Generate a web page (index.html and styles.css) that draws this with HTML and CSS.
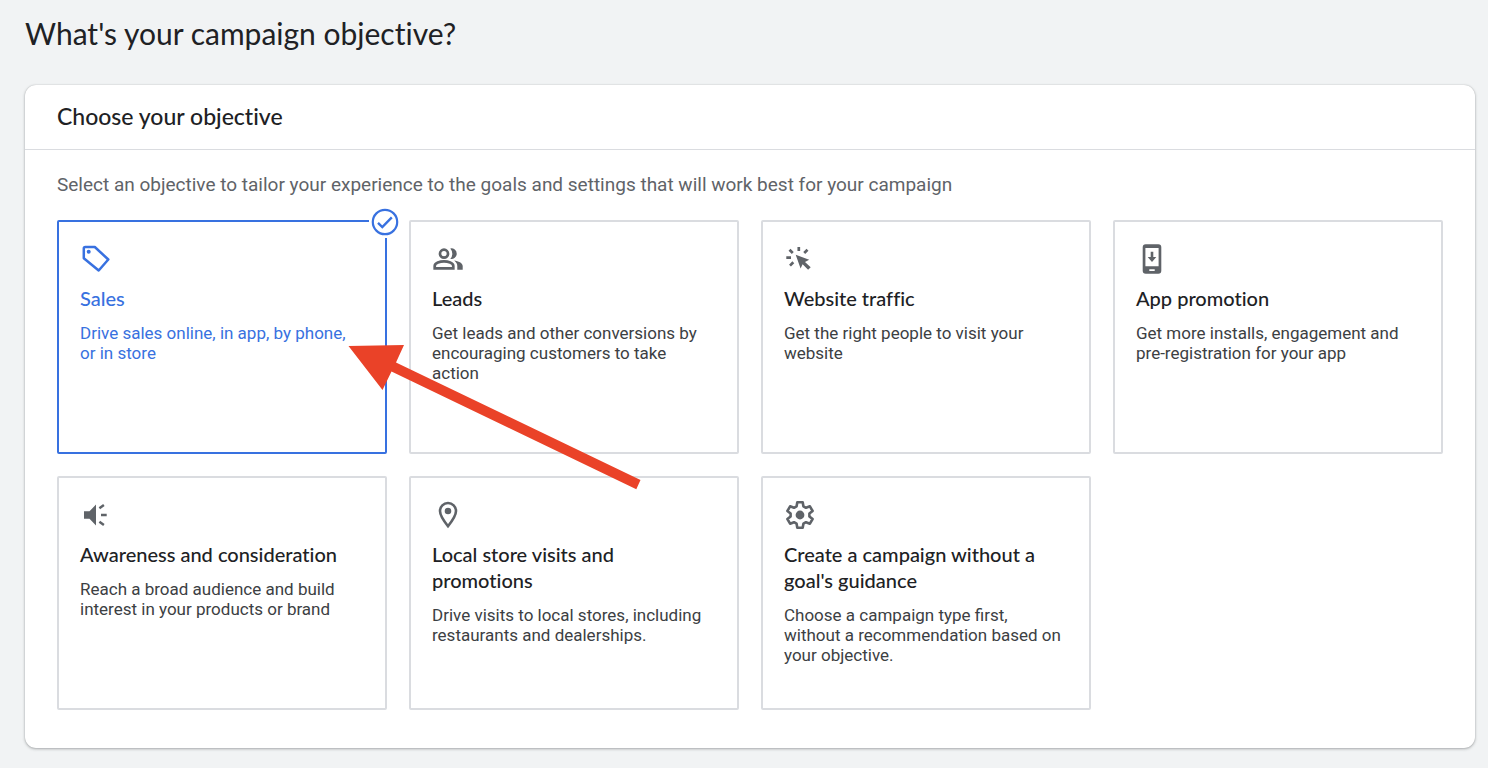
FILE: index.html
```html
<!doctype html>
<html lang="en">
<head>
	<meta charset="UTF-8">
	<meta name="viewport" content="width=device-width, initial-scale=1">
	<title>What's your campaign objective?</title>
	<link rel="stylesheet" href="styles.css">
</head>
<body>
	<main class="page">
		<h1 class="page-title">What's your campaign objective?</h1>

		<section class="panel">
			<h2 class="panel-title">Choose your objective</h2>
			<div class="panel-body">
				<p class="intro">Select an objective to tailor your experience to the goals and settings that will work best for your campaign</p>

				<ul class="objectives">
					<li class="objective">
						<button type="button" class="card selected" aria-pressed="true">
							<svg class="icon" viewBox="0 0 32 32" aria-hidden="true">
								<path d="M5.300 4H14.800L28.300 16.500 18.700 27.500 3.800 15.200V5.500Q3.800 4 5.300 4z" fill="none" stroke="currentColor" stroke-width="2.500" stroke-linejoin="round"/>
								<circle cx="8.700" cy="8.700" r="2" fill="currentColor"/>
							</svg>
							<span class="card-title">Sales</span>
							<span class="card-text">Drive sales online, in app, by phone, or in store</span>
						</button>
						<svg class="badge" viewBox="0 0 32 32" aria-hidden="true">
							<circle cx="16" cy="16" r="12.200" fill="none" stroke="currentColor" stroke-width="2.200"/>
							<path d="M9 16.800l4.300 4.200 9.500-9.700" fill="none" stroke="currentColor" stroke-width="2.400"/>
						</svg>
						<!-- pointer to the recommended objective -->
						<svg class="arrow" viewBox="348 344 294 147" aria-hidden="true">
							<path d="M348.500 346L404 345 396 362.500 640.500 480 636.300 489.300 391.500 371.500 382.500 390z"/>
						</svg>
					</li>
					<li class="objective">
						<button type="button" class="card" aria-pressed="false">
							<svg class="icon" viewBox="0 0 32 32" aria-hidden="true">
								<g fill="none" stroke="currentColor" stroke-width="2.700">
									<circle cx="12" cy="10.700" r="4"/>
									<path d="M2.700 25.300V23C2.700 20 8 18.300 12 18.300S21.300 20 21.300 23v2.300z"/>
								</g>
								<g fill="currentColor">
									<path d="M18.300 16a8 8 0 0 0 0-10.600 5.400 5.400 0 1 1 0 10.600z"/>
									<path d="M22.200 17.500c4 .6 8.500 2.400 8.500 5.500v3.700h-5.400V23c0-2.300-1.300-4.100-3.100-5.500z"/>
								</g>
							</svg>
							<span class="card-title">Leads</span>
							<span class="card-text">Get leads and other conversions by encouraging customers to take action</span>
						</button>
					</li>
					<li class="objective">
						<button type="button" class="card" aria-pressed="false">
							<svg class="icon" viewBox="0 0 32 32" aria-hidden="true">
								<path d="M2.300 14.700H7M5.500 6.700l3.300 3.300M14.800 4v4M20.200 10l3.300-3.300M6 22.600l3.300-3.300" fill="none" stroke="currentColor" stroke-width="2.700"/>
								<path d="M11.700 11.700l13.500 5-4.200 2.300 5.700 5.300-2.600 2.400-5.500-5.500-2 4.300z" fill="currentColor"/>
							</svg>
							<span class="card-title">Website traffic</span>
							<span class="card-text">Get the right people to visit your website</span>
						</button>
					</li>
					<li class="objective">
						<button type="button" class="card" aria-pressed="false">
							<svg class="icon" viewBox="0 0 32 32" aria-hidden="true">
								<path fill="currentColor" fill-rule="evenodd" d="M9.700 1.200h12.600a3 3 0 0 1 3 3v23.600a3 3 0 0 1-3 3H9.700a3 3 0 0 1-3-3V4.200a3 3 0 0 1 3-3zM9.400 5v18.300h13.200V5zM13.300 26.200V28h5.400v-1.800z"/>
								<path fill="currentColor" d="M14.700 8.700h2.600V14H20.300L16 19 11.700 14h3z"/>
							</svg>
							<span class="card-title">App promotion</span>
							<span class="card-text">Get more installs, engagement and pre-registration for your app</span>
						</button>
					</li>
					<li class="objective">
						<button type="button" class="card" aria-pressed="false">
							<svg class="icon" viewBox="0 0 32 32" aria-hidden="true">
								<path d="M4 12.300h5.500L16 5.600v20.800l-6.500-6.700H4z" fill="currentColor"/>
								<path d="M19.400 9.300l4.500-3.200M21 16h5.700M19.400 22.700l4.500 3.200" fill="none" stroke="currentColor" stroke-width="2.500"/>
							</svg>
							<span class="card-title">Awareness and consideration</span>
							<span class="card-text">Reach a broad audience and build interest in your products or brand</span>
						</button>
					</li>
					<li class="objective">
						<button type="button" class="card" aria-pressed="false">
							<svg class="icon" viewBox="0 0 32 32" aria-hidden="true">
								<path d="M16 27.200C12.500 22.800 8 17 8 12a8 8 0 0 1 16 0c0 5-4.500 10.800-8 15.200z" fill="none" stroke="currentColor" stroke-width="2.600"/>
								<circle cx="16" cy="12" r="3.300" fill="currentColor"/>
							</svg>
							<span class="card-title">Local store visits and promotions</span>
							<span class="card-text">Drive visits to local stores, including restaurants and dealerships.</span>
						</button>
					</li>
					<li class="objective">
						<button type="button" class="card" aria-pressed="false">
							<svg class="icon" viewBox="0 0 32 32" aria-hidden="true">
								<path d="M13.300 3.300h5.400l.7 4 2.600 1.500 3.900-1.500 2.700 4.700-3.200 2.600v2.800l3.200 2.600-2.700 4.700-3.900-1.500-2.600 1.500-.7 4h-5.400l-.7-4-2.600-1.500-3.900 1.500-2.700-4.700 3.200-2.600v-2.800l-3.200-2.600 2.700-4.700 3.900 1.500 2.600-1.500z" fill="none" stroke="currentColor" stroke-width="2.600" stroke-linejoin="round"/>
								<circle cx="16" cy="16" r="4.400" fill="currentColor"/>
							</svg>
							<span class="card-title">Create a campaign without a goal's guidance</span>
							<span class="card-text">Choose a campaign type first, without a recommendation based on your objective.</span>
						</button>
					</li>
				</ul>
			</div>
		</section>
	</main>
</body>
</html>
```
FILE: styles.css
```css
*{
	box-sizing: border-box;
	padding: 0;
	margin: 0;
}
body{
	background: #f1f3f4;
	color: #202124;
	font-family: Roboto, "Liberation Sans", sans-serif;
}
.page{
	padding: 15px 13px 20px 25px;
}
.page-title,
.panel-title,
.card-title{
	font-family: "Google Sans", Lato, sans-serif;
	font-variant-ligatures: none;
}
.page-title{
	font-size: 30px;
	font-weight: 400;
	line-height: 36px;
	margin-bottom: 34px;
}
.panel{
	background: #fff;
	border-radius: 11px;
	box-shadow: 0 1px 3px rgba(60,64,67,.4), 0 0 1px rgba(60,64,67,.3);
}
.panel-title{
	font-size: 23px;
	font-weight: 500;
	line-height: 24px;
	padding: 19px 32px 21px;
	border-bottom: 1px solid #dadce0;
}
.panel-body{
	padding: 23px 32px 38px;
}
.intro{
	color: #5f6368;
	font-size: 19px;
	line-height: 24px;
	margin-bottom: 23px;
}

/* objective cards */
.objectives{
	display: grid;
	grid-template-columns: repeat(4, 1fr);
	gap: 22px;
	list-style: none;
}
.objective{
	position: relative;
	display: flex;
}
.card{
	display: flex;
	flex-direction: column;
	align-items: flex-start;
	width: 100%;
	min-height: 234px;
	padding: 21px;
	border: 2px solid #dadce0;
	border-radius: 2px;
	background: #fff;
	color: #3c4043;
	font-family: inherit;
	text-align: left;
	cursor: pointer;
}
.card:hover{
	background: #f8f9fa;
}
.icon{
	width: 32px;
	height: 32px;
	color: #5f6368;
}
.card-title{
	margin-top: 10px;
	color: #202124;
	font-size: 20px;
	font-weight: 500;
	line-height: 26px;
}
.card-text{
	margin-top: 12px;
	font-size: 17px;
	line-height: 20px;
}
.selected{
	border-color: #3871e0;
}
.selected,
.selected .icon,
.selected .card-title{
	color: #3871e0;
}
.badge{
	position: absolute;
	top: -14px;
	right: -14px;
	width: 32px;
	height: 32px;
	background: #fff;
	color: #3871e0;
}
.arrow{
	position: absolute;
	z-index: 1;
	top: 124px;
	left: 291px;
	width: 294px;
	height: 147px;
	fill: #ea4228;
	pointer-events: none;
}
```
